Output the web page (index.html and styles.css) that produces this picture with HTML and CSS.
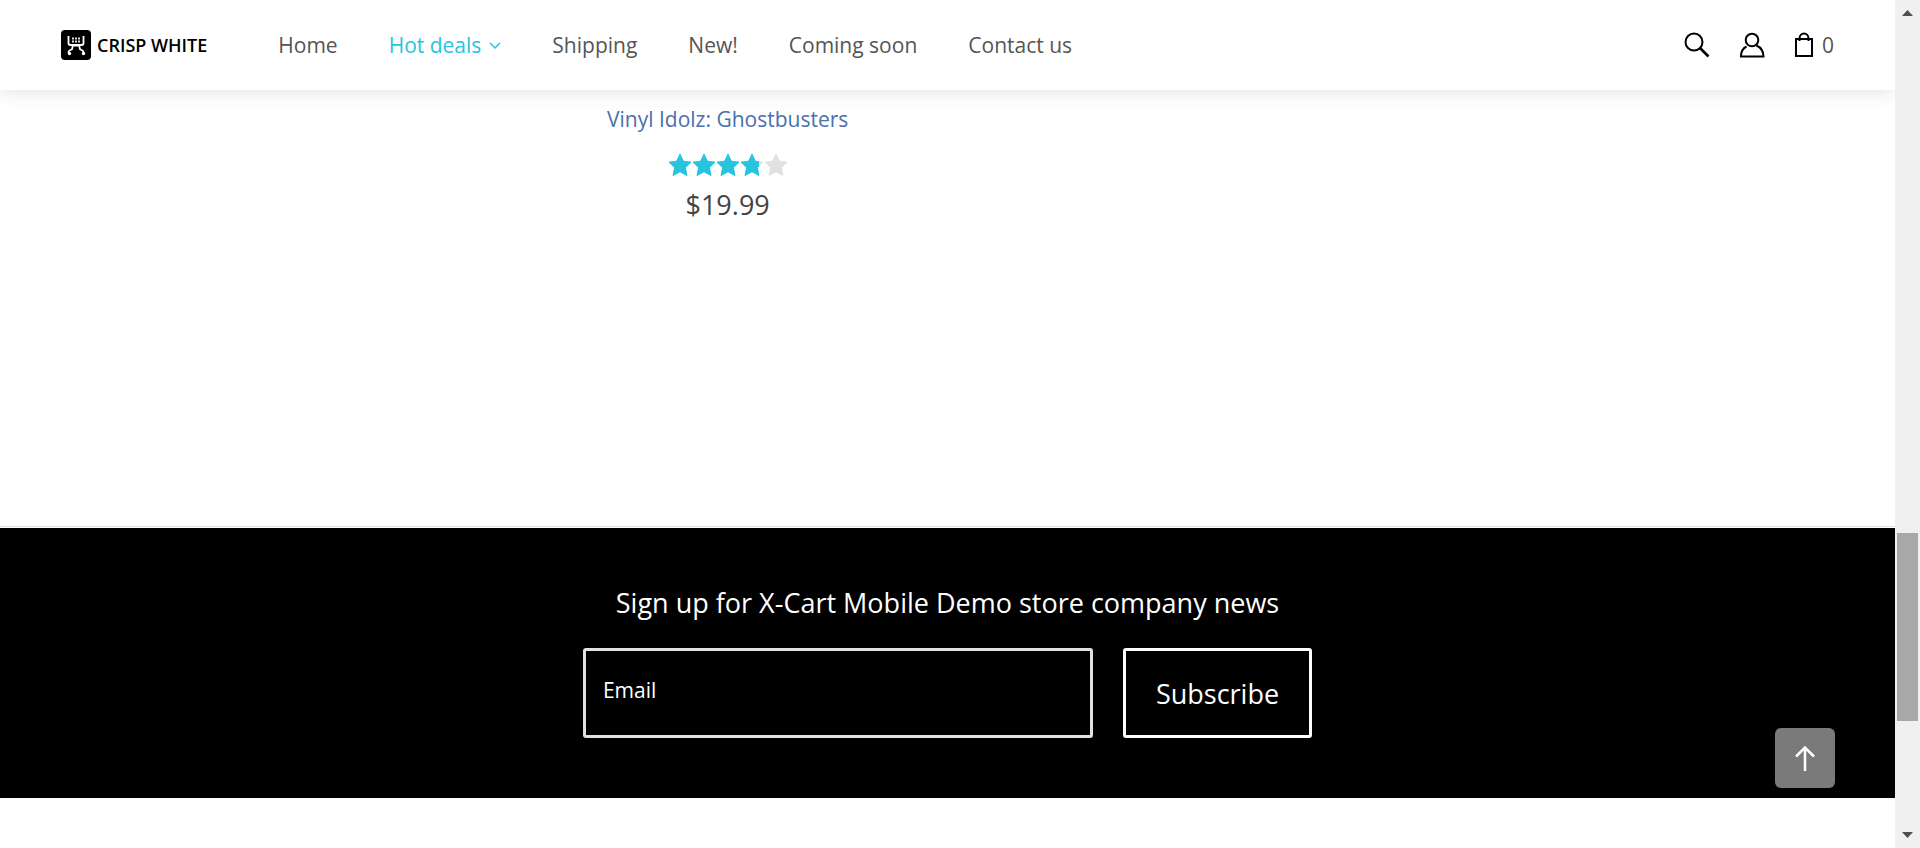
FILE: index.html
```html
<!DOCTYPE html>
<html lang="en">
<head>
<meta charset="utf-8">
<title>Crisp White</title>
<link rel="stylesheet" href="styles.css">
</head>
<body>
<div class="page">
  <header class="header">
    <a class="logo" href="#">
      <svg class="logo-mark" viewBox="0 0 30 30" aria-hidden="true">
        <rect width="30" height="30" rx="4"/>
        <path d="M7.500 6v7q0 2 2 2h11q2 0 2-2V6M11 15.500h8M11.500 16v1.500q0 2-2 2.500t-2 3M18.500 16v1.500q0 2 2 2.500t2 3" fill="none" stroke="#fff" stroke-width="1.800"/>
        <circle cx="8.500" cy="23.500" r="1.700" fill="#fff"/><circle cx="22.500" cy="23.500" r="1.700" fill="#fff"/>
        <path d="M11 8.500h8M11 11.500h8" fill="none" stroke="#ddd" stroke-width="2" stroke-dasharray="2 1"/>
      </svg>
      <span>CRISP WHITE</span>
    </a>
    <nav class="nav">
      <a href="#">Home</a>
      <a class="active" href="#">Hot deals<svg class="chevron" viewBox="0 0 12 8" aria-hidden="true"><path d="M1 1l5 5 5-5"/></svg></a>
      <a href="#">Shipping</a>
      <a href="#">New!</a>
      <a href="#">Coming soon</a>
      <a href="#">Contact us</a>
    </nav>
    <div class="tools">
      <button class="tool" aria-label="Search"><svg width="26" height="26" viewBox="0 0 26 26"><circle cx="10" cy="10" r="8.500"/><path d="M16 16l8.500 8.500" stroke-width="2.600"/></svg></button>
      <button class="tool" aria-label="Account"><svg width="26" height="26" viewBox="0 0 26 26"><circle cx="13" cy="8" r="6.300"/><path d="M7.500 14.500C3.500 16.500 2 20 2 24.500h22.500c0-5-2.500-9-7-11"/></svg></button>
      <button class="tool" aria-label="Cart"><svg width="20" height="26" viewBox="0 0 20 26"><path d="M2 7h16v17H2zM5.500 9V6.500a4.500 5 0 0 1 9 0V9"/></svg><span>0</span></button>
    </div>
  </header>
  <main>
    <section class="products">
      <article class="product">
        <a class="product-name" href="#">Vinyl Idolz: Ghostbusters</a>
        <svg class="stars" width="120" height="22" viewBox="0 0 120 22" role="img" aria-label="Rated 3.7 of 5">
          <defs>
            <path id="star" d="M12 0l3.300 7.200 7.700 1-5.600 5.400 1.500 7.900-6.900-3.800-6.900 3.800 1.500-7.900L1 8.200l7.700-1z" stroke-width="1" stroke-linejoin="round"/>
            <g id="row"><use href="#star"/><use href="#star" x="24"/><use href="#star" x="48"/><use href="#star" x="72"/><use href="#star" x="96"/></g>
            <clipPath id="rated"><rect width="91" height="22"/></clipPath>
          </defs>
          <use href="#row" fill="#e1e1e1" stroke="#e1e1e1"/>
          <use href="#row" fill="#27c4e0" stroke="#27c4e0" clip-path="url(#rated)"/>
        </svg>
        <span class="price">$19.99</span>
      </article>
    </section>
    <section class="signup">
      <h2>Sign up for X-Cart Mobile Demo store company news</h2>
      <form class="signup-form">
        <input type="email" placeholder="Email" aria-label="Email">
        <button type="button">Subscribe</button>
      </form>
    </section>
  </main>
  <button class="to-top" aria-label="Back to top"><svg width="20" height="26" viewBox="0 0 20 26"><path d="M10 26V3M1 11.500l9-9 9 9"/></svg></button>
</div>
<div class="scrollbar" aria-hidden="true">
  <svg class="arrow" viewBox="0 0 11 6"><path d="M0 6L5.500 0 11 6z"/></svg>
  <div class="gap-above"></div>
  <div class="thumb"></div>
  <div class="gap-below"></div>
  <svg class="arrow" viewBox="0 0 11 6"><path d="M0 0l5.500 6L11 0z"/></svg>
</div>
</body>
</html>
```

FILE: styles.css
```css
* { box-sizing: border-box; }
body {
  margin: 0;
  min-height: 100vh;
  display: grid;
  grid-template-columns: 1fr 25px;
  font-family: "Open Sans", "Noto Sans", sans-serif;
  font-size: 21px;
  font-weight: 400;
  color: #555;
  background: #fff;
}
a { color: inherit; text-decoration: none; }
button { font: inherit; color: inherit; background: none; border: 0; padding: 0; }
.page { position: relative; overflow: hidden; }

.header {
  position: relative;
  z-index: 1;
  display: flex;
  align-items: center;
  height: 90px;
  padding: 0 61px;
  background: #fff;
  box-shadow: 0 0 20px rgba(0, 0, 0, 0.14);
}
.logo {
  display: flex;
  align-items: center;
  gap: 6px;
  margin-right: 71px;
  font-size: 18px;
  font-weight: 600;
  color: #000;
}
.logo-mark { width: 30px; height: 30px; }
.nav { display: flex; gap: 51px; }
.nav .active { display: flex; align-items: center; gap: 8px; color: #27c4e0; }
.chevron {
  width: 12px;
  height: 8px;
  margin-top: 2px;
  fill: none;
  stroke: currentColor;
  stroke-width: 1.500;
}
.tools { display: flex; align-items: center; gap: 29px; margin-left: auto; }
.tool { display: flex; align-items: center; gap: 8px; }
.tool svg { fill: none; stroke: #000; stroke-width: 2; }

.products {
  display: grid;
  grid-template-columns: repeat(4, 1fr);
  padding: 14px 58px 302px 62px;
  border-bottom: 1px solid #e0e0e0;
  margin-bottom: 1px;
}
.product { grid-column: 2; display: flex; flex-direction: column; align-items: center; }
.product-name { color: #4a70ae; line-height: 30px; margin-bottom: 20px; }
.price { font-size: 27px; line-height: 38px; margin-top: 10px; color: #444; }

.signup {
  display: flex;
  flex-direction: column;
  align-items: center;
  padding: 56px 60px 60px;
  background: #000;
  color: #fff;
}
.signup h2 { margin: 0 0 26px; font-size: 27px; font-weight: 400; line-height: 38px; }
.signup-form { display: flex; gap: 30px; }
.signup-form input {
  width: 510px;
  height: 90px;
  padding: 0 17px 6px;
  border: 3px solid #e1e1e1;
  border-radius: 3px;
  background: #000;
  color: #fff;
  font: inherit;
}
.signup-form input::placeholder { color: #fff; opacity: 1; }
.signup-form button {
  height: 90px;
  padding: 0 30px;
  border: 3px solid #fff;
  border-radius: 3px;
  font-size: 27px;
}

.to-top {
  position: absolute;
  right: 60px;
  bottom: 60px;
  width: 60px;
  height: 60px;
  display: grid;
  place-items: center;
  border-radius: 6px;
  background: #7a7a7a;
}
.to-top svg { fill: none; stroke: #fff; stroke-width: 2.500; }

.scrollbar {
  display: flex;
  flex-direction: column;
  align-items: center;
  padding: 10px 2px;
  background: #f0f0f0;
}
.arrow { width: 11px; height: 6px; fill: #505050; }
.gap-above { flex: 517; }
.thumb { flex: 188; align-self: stretch; background: #a8a8a8; }
.gap-below { flex: 111; }
```
